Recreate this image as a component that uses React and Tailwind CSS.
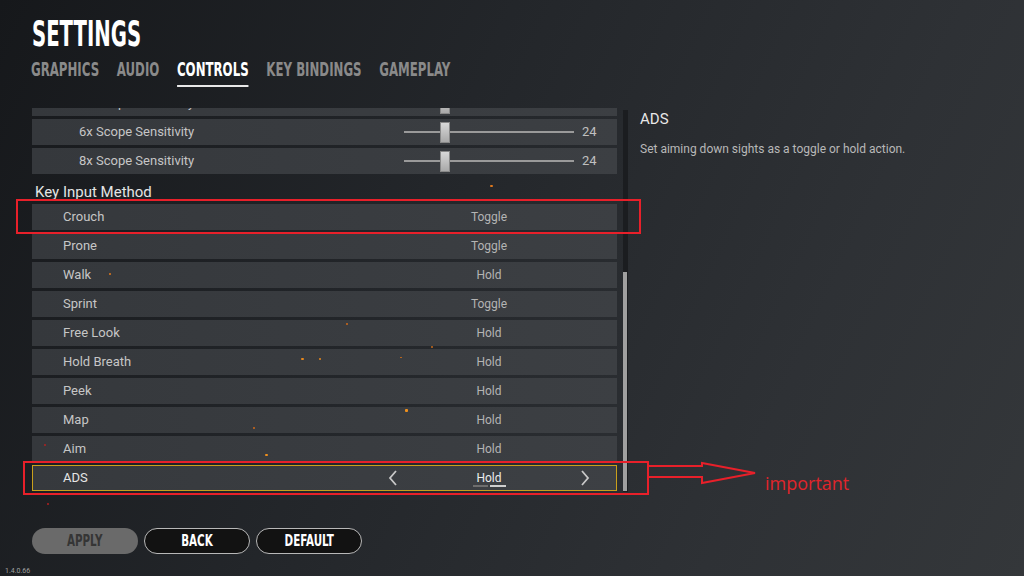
import React from "react";

const HEAD = { fontFamily: '"DejaVu Sans Condensed", "DejaVu Sans", sans-serif', fontStretch: "condensed" };

const keyRows = [
  ["Crouch", "Toggle"],
  ["Prone", "Toggle"],
  ["Walk", "Hold"],
  ["Sprint", "Toggle"],
  ["Free Look", "Hold"],
  ["Hold Breath", "Hold"],
  ["Peek", "Hold"],
  ["Map", "Hold"],
  ["Aim", "Hold"],
];

const sparks = [
  [490, 185, 3, 2, "#e0781c"],
  [109, 273, 2, 2, "#e0781c"],
  [346, 323, 2, 2, "#d06a18"],
  [301, 358, 3, 2, "#e8881c"],
  [319, 358, 2, 2, "#e8881c"],
  [400, 357, 2, 1, "#c86a18"],
  [431, 346, 2, 2, "#c86a18"],
  [405, 409, 3, 3, "#f0901c"],
  [253, 427, 2, 2, "#d06a18"],
  [265, 454, 3, 2, "#f0901c"],
  [44, 444, 2, 2, "#b02020"],
  [47, 503, 2, 2, "#b02020"],
];

function SliderRow({ label }) {
  return (
    <div className="flex items-center h-[26px] w-[585px] bg-[linear-gradient(90deg,#35383c,#3c3f43)]">
      <div className="pl-[47px] w-[372px] text-[13px] text-[#c6c6c6]">{label}</div>
      <div className="relative w-[170px] h-[22px] flex items-center">
        <div className="w-full h-[2px] bg-[#9a9a9a]" />
        <div className="absolute left-[36px] top-[1px] w-[10px] h-[21px] bg-[linear-gradient(180deg,#d8d8d8,#a8a8a8)] border border-[#888]" />
      </div>
      <div className="ml-[8px] text-[13px] text-[#c0c0c0]">24</div>
    </div>
  );
}

function KeyRow({ label, value }) {
  return (
    <div className="flex items-center h-[26px] w-[585px] bg-[linear-gradient(90deg,#35383c,#3c3f43)]">
      <div className="pl-[31px] flex-1 text-[13px] text-[#c6c6c6]">{label}</div>
      <div className="w-[202px] mr-[27px] text-center text-[12px] text-[#b4b4b4]">{value}</div>
    </div>
  );
}

function Btn({ children, apply }) {
  return (
    <div
      className={
        "w-[106px] h-[26px] rounded-full flex items-center justify-center " +
        (apply ? "bg-[#6a6a6a]" : "bg-[#121212] border-[1.5px] border-[#b8b8b8]")
      }
    >
      <span
        style={HEAD}
        className={
          "inline-block font-bold text-[16px] scale-x-[0.72] " + (apply ? "text-[#353535]" : "text-white")
        }
      >
        {children}
      </span>
    </div>
  );
}

export default function App() {
  return (
    <div
      className="relative w-[1024px] h-[576px] overflow-hidden bg-[linear-gradient(115deg,#16181b_0%,#23262a_40%,#2e3135_75%,#34373a_100%)]"
      style={{ fontFamily: 'Roboto, "Open Sans", sans-serif' }}
    >
      <div className="flex flex-col pl-[32px] pt-[14px]">
        {/* Title */}
        <div style={HEAD} className="h-[40px] text-[35px] font-bold text-white leading-[40px]">
          <span className="inline-block origin-left scale-x-[0.625]">SETTINGS</span>
        </div>
        {/* Tabs */}
        <div className="h-[32px] -ml-[1px]">
          <div style={HEAD} className="flex origin-left scale-x-[0.655] gap-[27px] text-[20px] font-bold leading-[30px] text-[#8a8a8a] whitespace-nowrap">
            <span>GRAPHICS</span>
            <span>AUDIO</span>
            <span className="relative text-white">
              CONTROLS
              <span className="absolute left-0 right-0 bottom-[-3px] h-[2px] bg-[#e8e8e8]" />
            </span>
            <span>KEY BINDINGS</span>
            <span>GAMEPLAY</span>
          </div>
        </div>

        {/* Main area */}
        <div className="flex mt-[22px]">
          <div className="w-[585px] h-[387px] overflow-hidden">
            <div className="-mt-[18px] flex flex-col gap-[3px]">
              <SliderRow label="4x Scope Sensitivity" />
              <SliderRow label="6x Scope Sensitivity" />
              <SliderRow label="8x Scope Sensitivity" />
              <div className="h-[24px] pl-[3px] flex items-end text-[15px] leading-[18px] text-[#e4e4e4]">
                Key Input Method
              </div>
              {keyRows.map(([l, v]) => (
                <KeyRow key={l} label={l} value={v} />
              ))}
              <div className="flex items-center h-[26px] w-[585px] border-[1.5px] border-[#c9a01c] bg-[linear-gradient(90deg,#36393d,#3d4044)]">
                <div className="pl-[30px] flex-1 text-[13px] text-[#e6e6e6]">ADS</div>
                <div className="w-[202px] mr-[26px] flex items-center justify-between text-[#c8c8c8]">
                  <svg width="10" height="16" viewBox="0 0 10 16" fill="none" stroke="#c8c8c8" strokeWidth="1.8">
                    <path d="M8 1 L2 8 L8 15" />
                  </svg>
                  <div className="relative text-[12px] text-[#ececec]">
                    Hold
                    <div className="absolute left-[-3px] top-[16px] flex gap-[2px]">
                      <div className="w-[15px] h-[2px] bg-[#6e6e6e]" />
                      <div className="w-[16px] h-[2px] bg-[#cfcfcf]" />
                    </div>
                  </div>
                  <svg width="10" height="16" viewBox="0 0 10 16" fill="none" stroke="#c8c8c8" strokeWidth="1.8">
                    <path d="M2 1 L8 8 L2 15" />
                  </svg>
                </div>
              </div>
            </div>
          </div>
          {/* Scrollbar */}
          <div className="ml-[6px] mt-[2px] w-[5px] h-[382px] bg-[#1b1d20] flex flex-col justify-end">
            <div className="h-[219px] w-[4px] mb-[1px] bg-[#a0a0a0]" />
          </div>
          {/* Info panel */}
          <div className="ml-[12px] flex flex-col">
            <div className="text-[15px] text-[#e8e8e8] leading-[18px] mt-[2px]">ADS</div>
            <div className="text-[12px] text-[#b8b8b8] mt-[12px]">
              Set aiming down sights as a toggle or hold action.
            </div>
          </div>
        </div>

        {/* Buttons */}
        <div className="flex gap-[6px] mt-[33px]">
          <Btn apply>APPLY</Btn>
          <Btn>BACK</Btn>
          <Btn>DEFAULT</Btn>
        </div>
      </div>

      {/* version */}
      <div className="absolute left-[5px] top-[567px] text-[7px] text-[#a0a0a0] leading-[8px]">1.4.0.66</div>

      {/* sparks */}
      {sparks.map(([x, y, w, h, c], i) => (
        <div
          key={i}
          className="absolute rounded-[1px]"
          style={{ left: x, top: y, width: w, height: h, background: c }}
        />
      ))}

      {/* annotations */}
      <div className="absolute left-[16px] top-[199px] w-[625px] h-[35px] border-2 border-[#e8202a]" />
      <div className="absolute left-[23px] top-[461px] w-[626px] h-[34px] border-2 border-[#e8202a]" />
      <svg className="absolute left-[648px] top-[461px]" width="112" height="26" viewBox="0 0 112 26" fill="none">
        <polyline points="0,5 54,5 54,2 107,12 54,22 54,16 0,16" stroke="#e8202a" strokeWidth="2" />
      </svg>
      <div
        className="absolute left-[765px] top-[472px] text-[18px] leading-[22px] text-[#e0252b]"
        style={{ fontFamily: '"Open Sans", sans-serif' }}
      >
        important
      </div>
    </div>
  );
}
